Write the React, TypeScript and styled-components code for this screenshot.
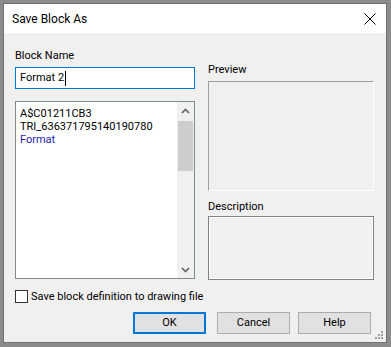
import React from "react";
import styled, { createGlobalStyle } from "styled-components";

const Global = createGlobalStyle`
  html, body { margin: 0; padding: 0; }
  body {
    background: #8c8c8c;
    width: 391px;
    height: 347px;
    overflow: hidden;
    font-family: Roboto, "Noto Sans", sans-serif;
    font-size: 11px;
    color: #000;
  }
`;

const Shade = styled.div`
  padding: 3px 4px 4px 3px;
`;

const Window = styled.div`
  position: relative;
  width: 384px;
  height: 340px;
  box-sizing: border-box;
  border: 1px solid #707070;
  background: #f0f0f0;
  display: flex;
  flex-direction: column;
`;

const TitleBar = styled.div`
  height: 29px;
  background: #fff;
  display: flex;
  align-items: center;
  justify-content: space-between;
  padding: 0 10px 0 8px;
  flex-shrink: 0;
`;

const Title = styled.span`
  font-size: 12px;
  line-height: 16px;
`;

const CloseIcon = styled.svg`
  width: 12px;
  height: 12px;
  margin-top: 1px;
`;

const Body = styled.div`
  display: flex;
  flex-direction: column;
  padding: 15px 12px 0 11px;
`;

const Columns = styled.div`
  display: grid;
  grid-template-columns: 180px 166px;
  column-gap: 13px;
  align-items: start;
`;

const Col = styled.div`
  display: flex;
  flex-direction: column;
`;

const Label = styled.div<{ $top?: number; $gap?: number }>`
  line-height: 16px;
  height: 16px;
  margin-top: ${(p) => p.$top ?? 0}px;
  margin-bottom: ${(p) => p.$gap ?? 3}px;
  white-space: nowrap;
`;

const NameInput = styled.div`
  height: 22px;
  box-sizing: border-box;
  border: 1px solid #0078d7;
  background: #fff;
  display: flex;
  align-items: center;
  padding-left: 4px;
  line-height: 16px;
`;

const Caret = styled.span`
  display: inline-block;
  width: 1px;
  height: 15px;
  background: #000;
  margin-left: 1px;
`;

const ListBox = styled.div`
  margin-top: 12px;
  height: 178px;
  box-sizing: border-box;
  border: 1px solid #828790;
  background: #fff;
  display: flex;
`;

const Items = styled.div`
  flex: 1;
  padding: 5px 0 0 4px;
  display: flex;
  flex-direction: column;
`;

const Item = styled.div<{ $current?: boolean }>`
  line-height: 13px;
  height: 13px;
  white-space: nowrap;
  color: ${(p) => (p.$current ? "#1e1eb0" : "#000")};
`;

const ScrollBar = styled.div`
  width: 17px;
  background: #f0f0f0;
  display: flex;
  flex-direction: column;
  align-items: center;
`;

const Arrow = styled.div`
  height: 17px;
  width: 17px;
  display: flex;
  align-items: center;
  justify-content: center;
`;

const Thumb = styled.div`
  width: 15px;
  height: 50px;
  background: #cdcdcd;
  margin-top: 2px;
`;

const Track = styled.div`
  flex: 1;
`;

const PreviewBox = styled.div`
  height: 110px;
  box-sizing: border-box;
  border: 1px solid;
  border-color: #a0a0a0 #fff #fff #a0a0a0;
  background: #f0f0f0;
`;

const DescBox = styled.div`
  height: 64px;
  box-sizing: border-box;
  border: 1px solid #828282;
  box-shadow: inset 0 0 0 1px #fff;
  background: #f0f0f0;
`;

const CheckRow = styled.div`
  margin-top: 8px;
  display: flex;
  align-items: center;
  height: 16px;
`;

const Box = styled.div`
  width: 13px;
  height: 13px;
  box-sizing: border-box;
  border: 1px solid #333;
  background: #fff;
  margin-right: 3px;
`;

const ButtonRow = styled.div`
  margin-top: 8px;
  display: flex;
  justify-content: flex-end;
  padding-right: 3px;
`;

const Button = styled.div<{ $focused?: boolean; $after?: number }>`
  width: 73px;
  height: 22px;
  box-sizing: border-box;
  border: ${(p) => (p.$focused ? "2px solid #0078d7" : "1px solid #adadad")};
  background: #e1e1e1;
  display: flex;
  align-items: center;
  justify-content: center;
  margin-right: ${(p) => p.$after ?? 0}px;
  line-height: 16px;
`;

const Grip = styled.svg`
  position: absolute;
  right: 2px;
  bottom: 2px;
  width: 9px;
  height: 9px;
`;

export default function App() {
  return (
    <>
      <Global />
      <Shade>
        <Window>
          <TitleBar>
            <Title>Save Block As</Title>
            <CloseIcon viewBox="0 0 12 12">
              <path d="M0.5 0.5 L11.5 11.5 M11.5 0.5 L0.5 11.5" stroke="#000" strokeWidth="1" fill="none" />
            </CloseIcon>
          </TitleBar>
          <Body>
            <Columns>
              <Col>
                <Label>Block Name</Label>
                <NameInput>
                  Format 2<Caret />
                </NameInput>
                <ListBox>
                  <Items>
                    <Item>A$C01211CB3</Item>
                    <Item>TRI_636371795140190780</Item>
                    <Item $current>Format</Item>
                  </Items>
                  <ScrollBar>
                    <Arrow>
                      <svg width="9" height="6" viewBox="0 0 9 6">
                        <path d="M1 5 L4.5 1.5 L8 5" stroke="#606060" strokeWidth="1.6" fill="none" />
                      </svg>
                    </Arrow>
                    <Thumb />
                    <Track />
                    <Arrow>
                      <svg width="9" height="6" viewBox="0 0 9 6">
                        <path d="M1 1 L4.5 4.5 L8 1" stroke="#606060" strokeWidth="1.6" fill="none" />
                      </svg>
                    </Arrow>
                  </ScrollBar>
                </ListBox>
              </Col>
              <Col>
                <Label $top={14}>Preview</Label>
                <PreviewBox />
                <Label $top={8} $gap={1}>Description</Label>
                <DescBox />
              </Col>
            </Columns>
            <CheckRow>
              <Box />
              <span>Save block definition to drawing file</span>
            </CheckRow>
            <ButtonRow>
              <Button $focused $after={11}>OK</Button>
              <Button $after={8}>Cancel</Button>
              <Button>Help</Button>
            </ButtonRow>
          </Body>
          <Grip viewBox="0 0 9 9">
            <g fill="#a0a0a0">
              <rect x="6" y="0" width="2" height="2" />
              <rect x="3" y="3" width="2" height="2" />
              <rect x="6" y="3" width="2" height="2" />
              <rect x="0" y="6" width="2" height="2" />
              <rect x="3" y="6" width="2" height="2" />
              <rect x="6" y="6" width="2" height="2" />
            </g>
          </Grip>
        </Window>
      </Shade>
    </>
  );
}
